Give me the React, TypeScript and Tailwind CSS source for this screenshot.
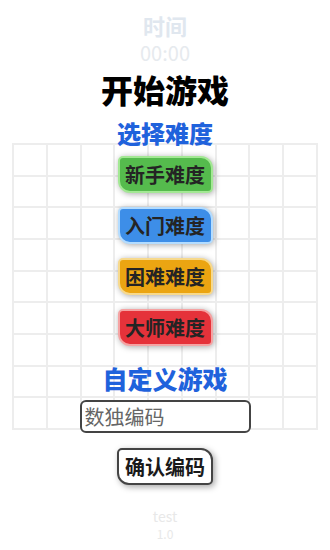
import React from "react";

const font = { fontFamily: '"Noto Sans CJK SC", "Noto Sans", sans-serif' };

const levels = [
  { label: "新手难度", cls: "bg-[#55bb4d] border-[#a3e894]" },
  { label: "入门难度", cls: "bg-[#3d8ee8] border-[#b3dcff]" },
  { label: "困难难度", cls: "bg-[#eba512] border-[#f7d98c]" },
  { label: "大师难度", cls: "bg-[#e5323a] border-[#f5a3a3]" },
];

export default function App() {
  return (
    <div
      className="relative w-[330px] h-[550px] bg-white overflow-hidden"
      style={font}
    >
      {/* sudoku board behind the menu */}
      <div className="absolute left-[12px] top-[143px] w-[306px] h-[287px] grid grid-cols-9 grid-rows-9 gap-[2px] p-[2px] bg-[#ededed]">
        {Array.from({ length: 81 }).map((_, i) => (
          <div key={i} className="bg-white" />
        ))}
      </div>

      <div className="relative flex flex-col items-center">
        <div className="mt-[13px] h-[24px] leading-[24px] text-[22px] font-bold text-[#e0e7ef]">时间</div>
        <div className="mt-[4px] h-[24px] leading-[24px] text-[20px] text-[#e6eaee]">00:00</div>
        <div className="mt-[4px] h-[40px] leading-[40px] text-[32px] font-black text-black">开始游戏</div>
        <div className="mt-[9px] h-[30px] leading-[30px] text-[24px] font-black text-[#1f62dc]">选择难度</div>
        <div className="mt-[8px] flex flex-col items-center gap-[14px]">
          {levels.map((l) => (
            <button
              key={l.label}
              className={`w-[95px] h-[37px] flex items-center justify-center border-2 rounded-tl-[5px] rounded-tr-[12px] rounded-bl-[12px] rounded-br-[5px] shadow-[1px_1px_6px_rgba(0,0,0,0.35)] text-[20px] leading-[26px] font-bold text-[#242424] ${l.cls}`}
            >
              {l.label}
            </button>
          ))}
        </div>
        <div className="mt-[17px] h-[30px] leading-[30px] text-[25px] font-black text-[#1f62dc]">自定义游戏</div>
        <input
          className="mt-[7px] w-[171px] h-[33px] border-2 border-[#444] rounded-[6px] bg-white px-[3px] text-[20px] leading-[26px] text-[#333] placeholder:text-[#666] outline-none"
          placeholder="数独编码"
          style={font}
        />
        <button className="mt-[15px] w-[96px] h-[37px] flex items-center justify-center bg-white border-2 border-[#444] rounded-tl-[5px] rounded-tr-[12px] rounded-bl-[12px] rounded-br-[5px] shadow-[2px_2px_6px_rgba(0,0,0,0.35)] text-[20px] leading-[26px] font-bold text-[#1a1a1a]">
          确认编码
        </button>
        <div className="mt-[22px] h-[18px] leading-[18px] text-[14px] text-[#e8e8e8]">test</div>
        <div className="mt-[1px] h-[16px] leading-[16px] text-[12px] text-[#e8e8e8]">1.0</div>
      </div>
    </div>
  );
}
